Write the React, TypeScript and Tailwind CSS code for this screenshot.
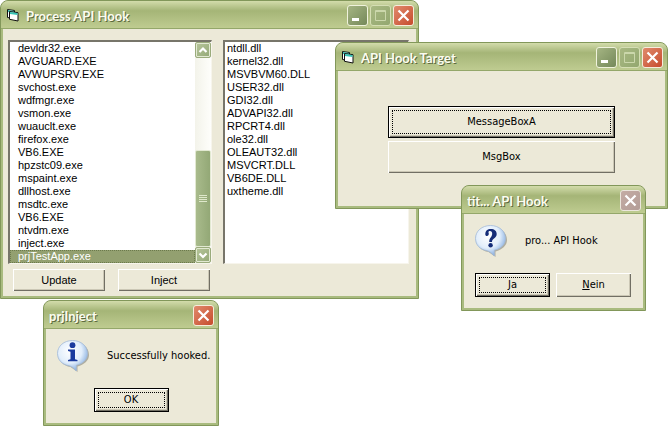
import { useState } from 'react'
import type { ReactNode } from 'react'
import clsx from 'clsx'

const PROCESSES = [
  'devldr32.exe',
  'AVGUARD.EXE',
  'AVWUPSRV.EXE',
  'svchost.exe',
  'wdfmgr.exe',
  'vsmon.exe',
  'wuauclt.exe',
  'firefox.exe',
  'VB6.EXE',
  'hpzstc09.exe',
  'mspaint.exe',
  'dllhost.exe',
  'msdtc.exe',
  'VB6.EXE',
  'ntvdm.exe',
  'inject.exe',
  'prjTestApp.exe',
]

const MODULES = [
  'ntdll.dll',
  'kernel32.dll',
  'MSVBVM60.DLL',
  'USER32.dll',
  'GDI32.dll',
  'ADVAPI32.dll',
  'RPCRT4.dll',
  'ole32.dll',
  'OLEAUT32.dll',
  'MSVCRT.DLL',
  'VB6DE.DLL',
  'uxtheme.dll',
]

// two stacked VB forms, the front one shifted down and right
function FormIcon() {
  return (
    <svg className="mr-[2px] size-4 shrink-0" viewBox="0 0 16 16" aria-hidden="true">
      <path d="M1.500 2.500l7 1v8l-7-1z" fill="#fff" stroke="#111" />
      <path d="M2 3l6 .9v2l-6-.9z" fill="#35b8a8" />
      <path d="M3.500 4.500l8.500 1.200v8.300l-8.500-1.700z" fill="#fff" stroke="#111" />
      <path d="M4 5.100l7.500 1v2L4 7z" fill="#35c4b4" />
    </svg>
  )
}

type CaptionKind = 'min' | 'max' | 'close' | 'close-dim'

const CAPTION_STYLE: Record<CaptionKind, string> = {
  min:         'border-[#eff2dc] bg-linear-to-br from-[#a5b583] to-[#75895a]',
  max:         'border-[#d5deb4] bg-linear-to-br from-[#a9b983] to-[#93a76f]',
  close:       'border-[#f6ecdc] bg-linear-to-br from-[#e08a6c] to-[#c64a2c]',
  'close-dim': 'border-[#ebe6dc] bg-linear-to-br from-[#c4aca4] to-[#b39d97]',
}

const CAPTION_LABEL: Record<CaptionKind, string> = {
  min:         'Minimize',
  max:         'Maximize',
  close:       'Close',
  'close-dim': 'Close',
}

function CaptionButton({ kind }: { kind: CaptionKind }) {
  return (
    <button
      type="button"
      aria-label={CAPTION_LABEL[kind]}
      disabled={kind === 'max' || kind === 'close-dim'}
      className={clsx('size-[21px] shrink-0 rounded-[3px] border', CAPTION_STYLE[kind])}
    >
      <svg className="size-[19px]" viewBox="0 0 19 19" aria-hidden="true">
        {kind === 'min' && <path d="M4 12h7v3H4z" fill="#fff" />}
        {kind === 'max' && <path d="M4.5 4.5h10v10h-10zM4 5.5h11" fill="none" stroke="#cbd7ab" />}
        {(kind === 'close' || kind === 'close-dim') && (
          <path d="M4.5 4.5l10 10M14.5 4.5l-10 10" stroke="#fff" strokeWidth="2.2" />
        )}
      </svg>
    </button>
  )
}

interface WindowProps {
  title: string
  buttons: CaptionKind[]
  icon?: boolean
  className?: string
  children: ReactNode
}

function Window({ title, buttons, icon, className, children }: WindowProps) {
  return (
    <section
      aria-label={title}
      className={clsx('absolute flex flex-col rounded-t-lg border border-[#82975a] bg-[#a9bb7f]', className)}
    >
      <header className="flex h-7 shrink-0 items-center gap-[2px] rounded-t-[7px] bg-linear-to-b from-[#d3dcab] via-[#a5b577] via-35% to-[#c0cd92] pr-1 pl-[5px] shadow-[inset_0_-1px_0_#94a76a]">
        {icon && <FormIcon />}
        <h2 className="grow truncate pt-[2px] font-[Lato,sans-serif] text-[13px] leading-5 font-bold text-[#fbfcf0] [text-shadow:1px_1px_0_#5c6a3e]">
          {title}
        </h2>
        {buttons.map(kind => <CaptionButton key={kind} kind={kind} />)}
      </header>
      <div className="mx-[2px] mb-[2px] flex grow flex-col bg-[#ece9d8]">{children}</div>
    </section>
  )
}

interface PushButtonProps {
  children: ReactNode
  focused?: boolean
  className?: string
}

function PushButton({ children, focused, className }: PushButtonProps) {
  return (
    <button
      type="button"
      className={clsx(
        'relative flex items-center justify-center bg-[#ece9d8] text-[11px] text-black',
        'shadow-[inset_1px_1px_0_#fff,inset_-1px_-1px_0_#716f64,inset_-2px_-2px_0_#cbc7b5]',
        focused && 'border border-black',
        className,
      )}
    >
      {focused && <span className="absolute inset-[3px] border border-dotted border-black" />}
      {children}
    </button>
  )
}

interface ListBoxProps {
  label: string
  items: string[]
  selected?: number
  onSelect?: (index: number) => void
  itemClass: string
  children?: ReactNode
}

function ListBox({ label, items, selected, onSelect, itemClass, children }: ListBoxProps) {
  return (
    <div className="flex min-w-0 flex-1 border-t-2 border-r border-b border-l-2 border-t-[#77756a] border-r-[#f7f5ec] border-b-[#f7f5ec] border-l-[#77756a] bg-white">
      <ul role="listbox" aria-label={label} className="min-w-0 grow text-[11px] leading-[13px]">
        {items.map((item, i) => (
          <li
            key={i}
            role="option"
            aria-selected={i === selected}
            onClick={() => onSelect?.(i)}
            className={clsx(
              'truncate',
              itemClass,
              i === selected && 'bg-[#93a070] text-white outline-1 -outline-offset-1 outline-dotted outline-[#6c7a4c]',
            )}
          >
            {item}
          </li>
        ))}
      </ul>
      {children}
    </div>
  )
}

function ScrollArrow({ down }: { down?: boolean }) {
  return (
    <button
      type="button"
      aria-label={down ? 'Scroll down' : 'Scroll up'}
      className="h-4 shrink-0 rounded-[2px] border border-[#9aab7c] bg-linear-to-br from-[#b7c69b] to-[#93a876] shadow-[inset_0_0_0_1px_#e2e9d2]"
    >
      <svg className="mx-auto size-3" viewBox="0 0 12 12" aria-hidden="true">
        <path d={down ? 'M2.5 4.5L6 8l3.5-3.5' : 'M2.5 8L6 4.5 9.5 8'} fill="none" stroke="#fff" strokeWidth="2.2" />
      </svg>
    </button>
  )
}

function ScrollBar() {
  return (
    <div className="flex w-4 shrink-0 flex-col bg-linear-to-r from-[#f3f3ea] to-[#fefefb]">
      <ScrollArrow />
      <div className="grow" />
      <div className="flex h-[97px] flex-col items-center justify-center gap-px rounded-[2px] border border-[#e2e9d2] bg-linear-to-r from-[#a9bb8c] to-[#93a876]">
        {[0, 1, 2, 3].map(n => (
          <span key={n} className="h-px w-2 bg-[#dfe8cb]" />
        ))}
      </div>
      <ScrollArrow down />
    </div>
  )
}

function BalloonIcon({ kind }: { kind: 'question' | 'info' }) {
  return (
    <svg className="size-8 shrink-0" viewBox="0 0 32 32" aria-hidden="true">
      <defs>
        <radialGradient id={`balloon-${kind}`} cx="0.42" cy="0.35" r="0.65">
          <stop offset="0" stopColor="#fff" />
          <stop offset="0.6" stopColor="#e2eefb" />
          <stop offset="1" stopColor="#86aee0" />
        </radialGradient>
      </defs>
      <path
        d="M17 2C8.500 2 2 7.500 2 15c0 6.500 4.500 11 11.500 12L20.500 32v-5.500C27 24.800 32 20.500 32 15 32 7.500 25.500 2 17 2z"
        fill="#85857a"
        opacity="0.6"
      />
      <path
        d="M15.500 .5C7 .5 .5 6 .5 13.500c0 6.500 4.500 11 11.500 12.200 2.500 .6 5 2.500 7.300 5.300v-5.800c7-1.500 11.200-6 11.200-11.700C30.500 6 24 .5 15.500 .5z"
        fill={`url(#balloon-${kind})`}
        stroke="#a3bad8"
        strokeWidth="0.8"
      />
      {kind === 'question' ? (
        <g fill="#142c78">
          <path d="M10.300 9.500C10.300 5.500 12.500 4 15.700 4c3.800 0 6 2 6 5 0 4.300-4.700 4.300-4.700 8h-2.800c0-4.500 3-5 3-8.300 0-1.700-.8-2.700-2.200-2.700-1.200 0-1.700 .6-1.500 1.500 .9 1.800-.2 3.500-1.600 3.500-1 0-1.600-.6-1.600-1.500z" />
          <circle cx="15.600" cy="20.300" r="2.200" />
        </g>
      ) : (
        <g fill="#1a3a9e">
          <circle cx="15.500" cy="5.200" r="2.900" />
          <path d="M11 9.500h7v9.700l2.500 .8v1.300H11V20l2.500-.8v-7.400L11 11z" />
        </g>
      )}
    </svg>
  )
}

export default function App() {
  const [selected, setSelected] = useState(PROCESSES.length - 1)

  return (
    <main className="relative min-h-screen overflow-hidden bg-white font-['DejaVu_Sans_Condensed','DejaVu_Sans',sans-serif] text-[11px] text-black">
      <Window
        title="Process API Hook"
        icon
        buttons={['min', 'max', 'close']}
        className="top-0 left-0 w-[419px] font-['Liberation_Sans',Arial,sans-serif]"
      >
        <div className="flex gap-[11px] pt-[11px] pr-[7px] pl-[5px]">
          <div className="flex w-[204px] flex-col">
            <ListBox
              label="Processes"
              items={PROCESSES}
              selected={selected}
              onSelect={setSelected}
              itemClass="pl-2"
            >
              <ScrollBar />
            </ListBox>
          </div>
          <ListBox label="Modules" items={MODULES} itemClass="pl-[2px]" />
        </div>
        <div className="flex gap-[13px] px-[10px] py-[5px]">
          <PushButton className="h-[22px] w-[92px]">Update</PushButton>
          <PushButton className="h-[22px] w-[92px]">Inject</PushButton>
        </div>
      </Window>

      <Window
        title="API Hook Target"
        icon
        buttons={['min', 'max', 'close']}
        className="top-[42px] left-[335px] w-[333px]"
      >
        <div className="flex flex-col gap-[3px] px-[50px] pt-[35px] pb-[33px]">
          <PushButton focused className="h-8">MessageBoxA</PushButton>
          <PushButton className="h-8">MsgBox</PushButton>
        </div>
      </Window>

      <Window title="tit... API Hook" buttons={['close-dim']} className="top-[185px] left-[461px] w-[185px]">
        <div className="flex items-center gap-[18px] px-[11px] pt-[11px]">
          <BalloonIcon kind="question" />
          <p>pro... API Hook</p>
        </div>
        <div className="flex gap-[6px] px-[11px] pt-4 pb-[11px]">
          <PushButton focused className="h-6 w-[75px]"><span><u>J</u>a</span></PushButton>
          <PushButton className="h-6 w-[75px]"><span><u>N</u>ein</span></PushButton>
        </div>
      </Window>

      <Window title="prjInject" buttons={['close']} className="top-[300px] left-[43px] w-[176px]">
        <div className="flex items-center gap-[18px] px-[11px] pt-[11px]">
          <BalloonIcon kind="info" />
          <p className="whitespace-nowrap">Successfully hooked.</p>
        </div>
        <div className="flex justify-center pt-4 pb-[11px]">
          <PushButton focused className="h-6 w-[75px]">OK</PushButton>
        </div>
      </Window>
    </main>
  )
}
